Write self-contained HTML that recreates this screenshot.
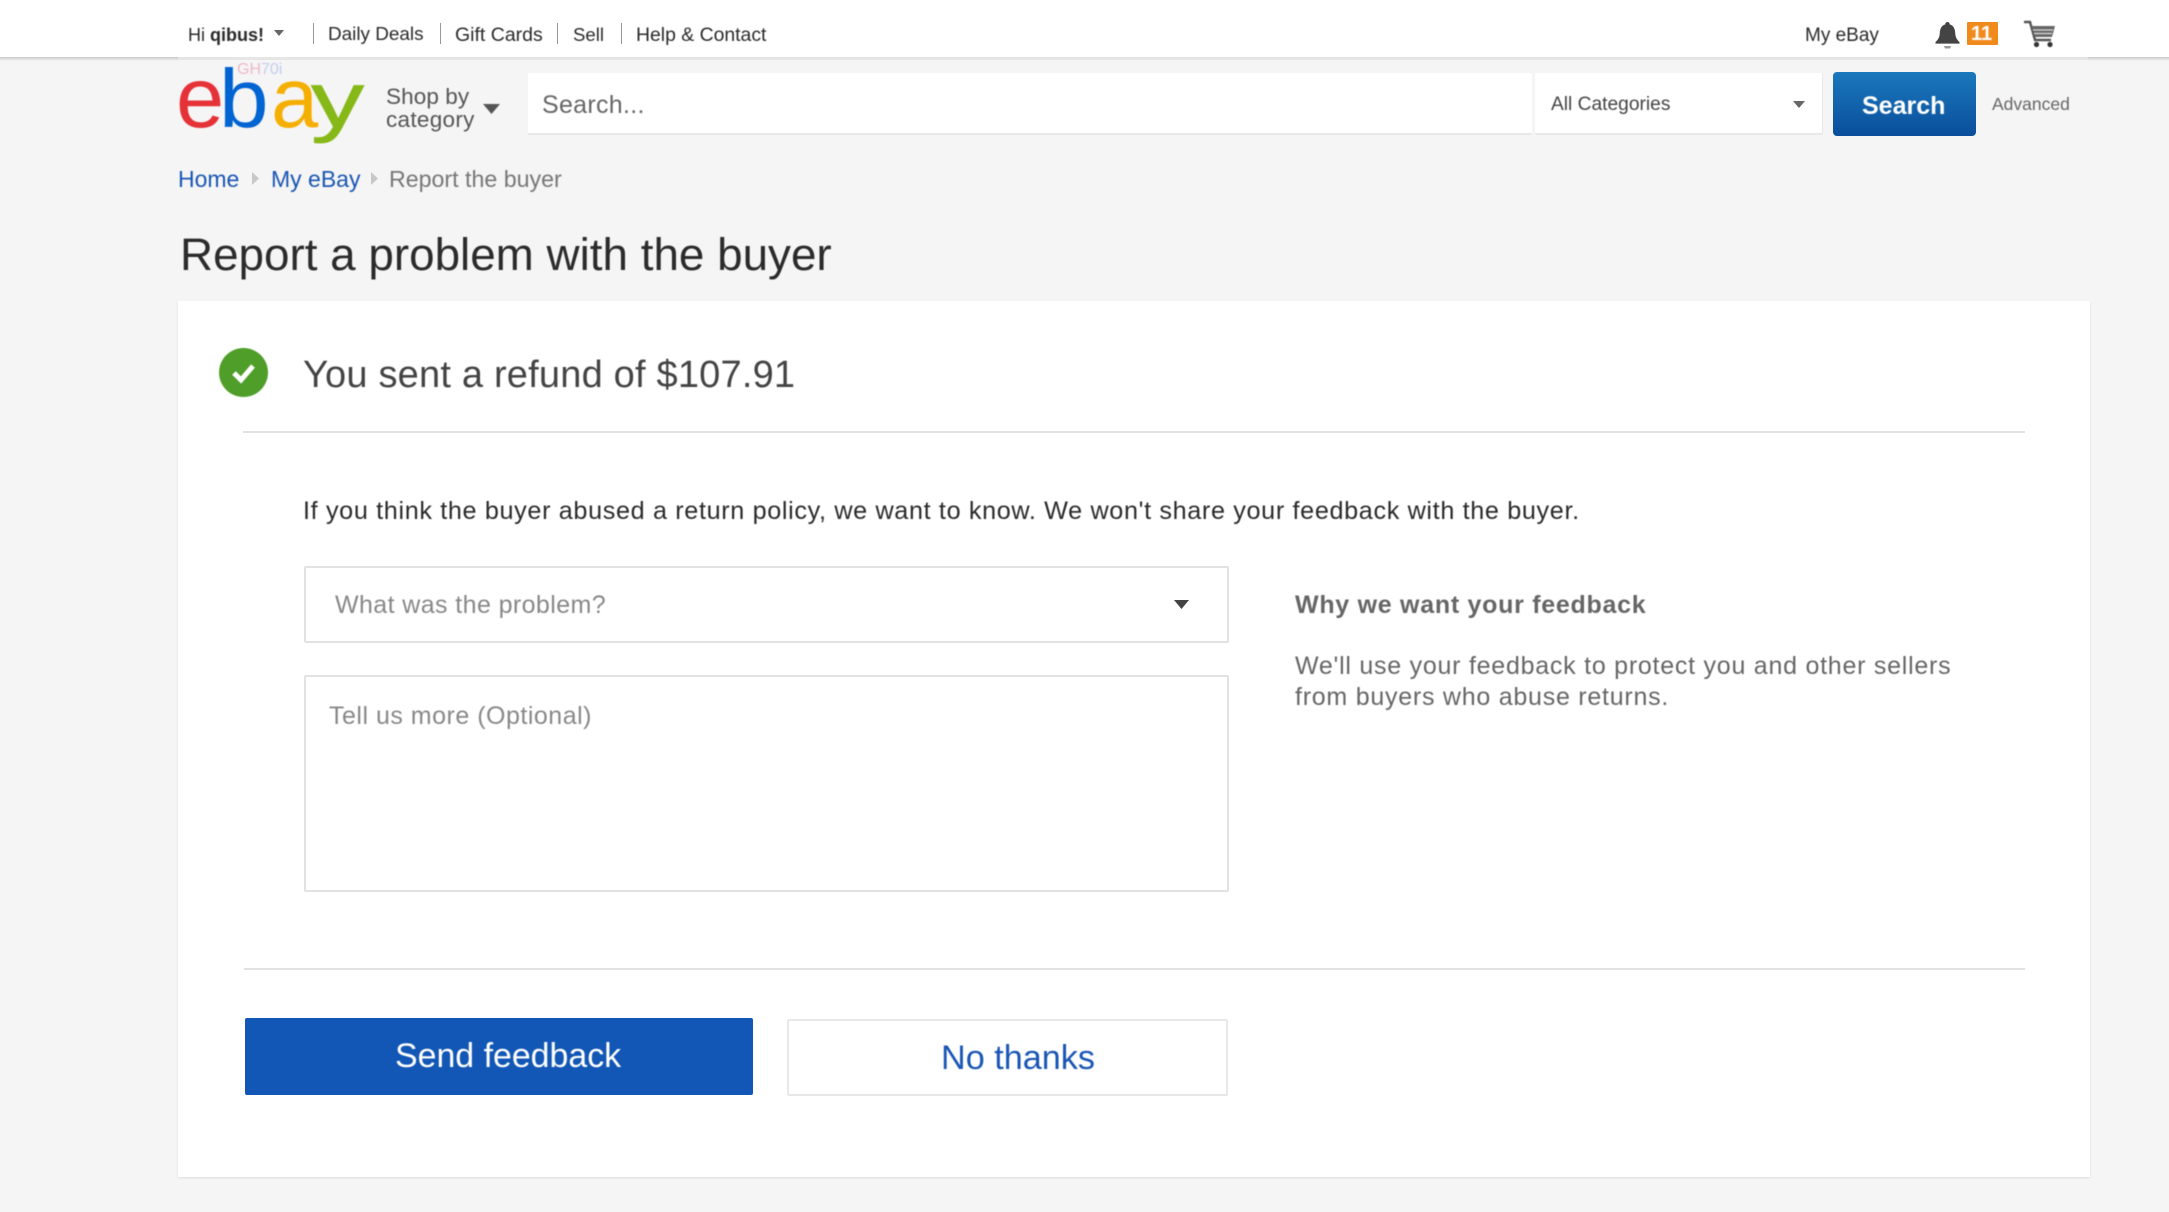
<!DOCTYPE html>
<html lang="en"><head><meta charset="utf-8"><title>Report a problem with the buyer</title>
<style>
html,body{margin:0;padding:0;background:#f5f5f5}
body{width:2169px;height:1212px;position:relative;overflow:hidden;font-family:"Liberation Sans",Arial,sans-serif;color:#333}
.a{position:absolute;white-space:nowrap;line-height:1;filter:blur(.55px)}
.b{position:absolute;box-sizing:border-box;filter:blur(.35px)}
a{text-decoration:none;color:inherit}
svg{position:absolute;overflow:visible}
</style></head><body>
<div class="b" style="left:0;top:56px;width:178px;height:5px;background:linear-gradient(#bdbdbd,#f5f5f5)"></div>
<div class="b" style="left:2088px;top:56px;width:81px;height:5px;background:linear-gradient(#bdbdbd,#f5f5f5)"></div>
<div class="b" style="left:0;top:0;width:2169px;height:57px;background:#fff;filter:none"></div>
<div class="b" style="left:178px;top:57px;width:1910px;height:3px;background:#e6e6e6"></div>

<span class="a" style="left:188px;top:26px;font-size:18px;color:#2a2a2a">Hi <b>qibus!</b></span>
<svg style="left:274px;top:30px" width="10" height="6"><path d="M0 0H10L5 6Z" fill="#666"/></svg>
<div class="b" style="left:313px;top:23px;width:1px;height:21px;background:#999"></div>
<span class="a" style="left:328px;top:26px;font-size:18.9px;color:#2a2a2a">Daily Deals</span>
<div class="b" style="left:440px;top:23px;width:1px;height:21px;background:#999"></div>
<span class="a" style="left:455px;top:26px;font-size:19.5px;color:#2a2a2a">Gift Cards</span>
<div class="b" style="left:557px;top:23px;width:1px;height:21px;background:#999"></div>
<span class="a" style="left:573px;top:26px;font-size:18.6px;color:#2a2a2a">Sell</span>
<div class="b" style="left:621px;top:23px;width:1px;height:21px;background:#999"></div>
<span class="a" style="left:636px;top:26px;font-size:19.4px;color:#2a2a2a">Help &amp; Contact</span>
<span class="a" style="left:1805px;top:26px;font-size:19px;color:#2a2a2a">My eBay</span>

<svg style="left:1935px;top:22px" width="25" height="27" viewBox="0 0 25 27"><path d="M12.5 0c1.4 0 2.2 1 2.2 2.4 4 1.2 5.3 4.6 5.5 8.6.2 4 1.5 6.6 4.3 9v1.6H.5V20c2.8-2.4 4.1-5 4.3-9 .2-4 1.5-7.4 5.500-8.600C10.300 1 11.100 0 12.500 0z" fill="#444"/><path d="M9 24h7l-1 2.500h-5z" fill="#999"/></svg>
<div class="b" style="left:1967px;top:22px;width:31px;height:23px;background:#f18a1c;border-radius:1px"></div>
<span class="a" style="left:1971px;top:24px;font-size:20px;font-weight:bold;color:#fff">11</span>
<svg style="left:2023px;top:20px;filter:blur(.4px)" width="33" height="28" viewBox="0 0 33 28"><path d="M1 2h6l5 18h16" fill="none" stroke="#555" stroke-width="2.400"/><path d="M8 6h24l-3 11H12z" fill="#666"/><path d="M10 10h20M11 13.500h18" stroke="#ddd" stroke-width="1.200"/><circle cx="13.500" cy="24.500" r="2.600" fill="#333"/><circle cx="27" cy="24.500" r="2.600" fill="#333"/></svg>

<svg style="left:178px;top:60px;filter:blur(.6px)" width="190" height="90">
<text x="59" y="14" font-family="Liberation Sans" font-size="16" fill="#eeb8c8">GH<tspan fill="#c4cdee">70i</tspan></text>
<g font-family="Liberation Sans">
<text transform="translate(-2 67) scale(1.02 1)" font-size="85" fill="#e53238">e</text>
<text transform="translate(41 67) scale(1.05 .97)" font-size="85" fill="#0064d2">b</text>
<text transform="translate(93 67) scale(1 1)" font-size="85" fill="#f5af02">a</text>
<text transform="translate(133 67) scale(1.25 .92)" font-size="85" fill="#86b817" stroke="#86b817" stroke-width=".8">y</text></g></svg>

<span class="a" style="left:386px;top:86px;font-size:22.500px;color:#555;letter-spacing:.1px">Shop by</span>
<span class="a" style="left:386px;top:109px;font-size:22.500px;color:#555;letter-spacing:.3px">category</span>
<svg style="left:483px;top:104px;filter:blur(.4px)" width="17" height="10"><path d="M0 0H17L8.500 10Z" fill="#555"/></svg>

<div class="b" style="left:528px;top:73px;width:1004px;height:62px;background:#fff;border-bottom:2px solid #e8e8e8;border-radius:2px"></div>
<span class="a" style="left:542px;top:93px;font-size:25px;color:#666;letter-spacing:.3px">Search...</span>
<div class="b" style="left:1535px;top:73px;width:288px;height:62px;background:#fff;border-bottom:2px solid #e8e8e8;border-right:1px solid #e8e8e8;border-radius:2px"></div>
<span class="a" style="left:1551px;top:95px;font-size:19.200px;color:#444">All Categories</span>
<svg style="left:1793px;top:101px" width="12" height="7"><path d="M0 0H12L6 7Z" fill="#666"/></svg>
<div class="b" style="left:1833px;top:72px;width:143px;height:64px;border-radius:4px;background:linear-gradient(#1a78bc,#0a4e9b)"></div>
<span class="a" style="left:1862px;top:94px;font-size:25px;font-weight:bold;color:#fff">Search</span>
<span class="a" style="left:1992px;top:96px;font-size:17.500px;color:#666">Advanced</span>

<a class="a" style="left:178px;top:168px;font-size:23px;color:#1a56b4">Home</a>
<svg style="left:252px;top:172px" width="7" height="13"><path d="M0 0L7 6.500L0 13Z" fill="#c8c8c8"/></svg>
<a class="a" style="left:271px;top:168px;font-size:23px;color:#1a56b4">My eBay</a>
<svg style="left:371px;top:172px" width="7" height="13"><path d="M0 0L7 6.500L0 13Z" fill="#c8c8c8"/></svg>
<span class="a" style="left:389px;top:168px;font-size:23.200px;color:#777">Report the buyer</span>

<span class="a" style="left:180px;top:232px;font-size:45.800px;color:#2b2b2b">Report a problem with the buyer</span>

<div class="b" style="left:178px;top:301px;width:1912px;height:876px;background:#fff;box-shadow:0 1px 2px #dcdcdc"></div>

<svg style="left:219px;top:348px;filter:blur(.4px)" width="49" height="49" viewBox="0 0 49 49"><circle cx="24.500" cy="24.500" r="24.500" fill="#4f9e2a"/><path d="M15 25l7 7 12-14" fill="none" stroke="#fff" stroke-width="5"/></svg>
<span class="a" style="left:303px;top:356px;font-size:38px;color:#444;letter-spacing:.2px">You sent a refund of $107.91</span>
<div class="b" style="left:243px;top:431px;width:1782px;height:2px;background:#e2e2e2"></div>

<span class="a" style="left:303px;top:499px;font-size:25.200px;color:#2a2a2a;letter-spacing:.65px">If you think the buyer abused a return policy, we want to know. We won't share your feedback with the buyer.</span>

<div class="b" style="left:304px;top:566px;width:925px;height:77px;background:#fff;border:2px solid #e2e2e2;border-radius:2px"></div>
<span class="a" style="left:335px;top:593px;font-size:25px;color:#888;letter-spacing:.4px">What was the problem?</span>
<svg style="left:1174px;top:600px" width="15" height="9"><path d="M0 0H15L7.500 9Z" fill="#444"/></svg>
<div class="b" style="left:304px;top:675px;width:925px;height:217px;background:#fff;border:2px solid #e2e2e2;border-radius:2px"></div>
<span class="a" style="left:329px;top:704px;font-size:25px;color:#888;letter-spacing:.5px">Tell us more (Optional)</span>

<b class="a" style="left:1295px;top:593px;font-size:25px;color:#666;letter-spacing:.72px">Why we want your feedback</b>
<span class="a" style="left:1295px;top:654px;font-size:25px;color:#666;letter-spacing:.75px">We'll use your feedback to protect you and other sellers</span>
<span class="a" style="left:1295px;top:685px;font-size:25px;color:#666;letter-spacing:.75px">from buyers who abuse returns.</span>

<div class="b" style="left:244px;top:968px;width:1781px;height:2px;background:#e2e2e2"></div>
<div class="b" style="left:245px;top:1018px;width:508px;height:77px;background:#1257b5;border-radius:2px"></div>
<span class="a" style="left:395px;top:1040px;font-size:33.900px;color:#fff">Send feedback</span>
<div class="b" style="left:787px;top:1019px;width:441px;height:77px;background:#fff;border:2px solid #e8e8e8;border-radius:2px"></div>
<span class="a" style="left:941px;top:1041px;font-size:34.200px;color:#1a56b4">No thanks</span>
</body></html>
